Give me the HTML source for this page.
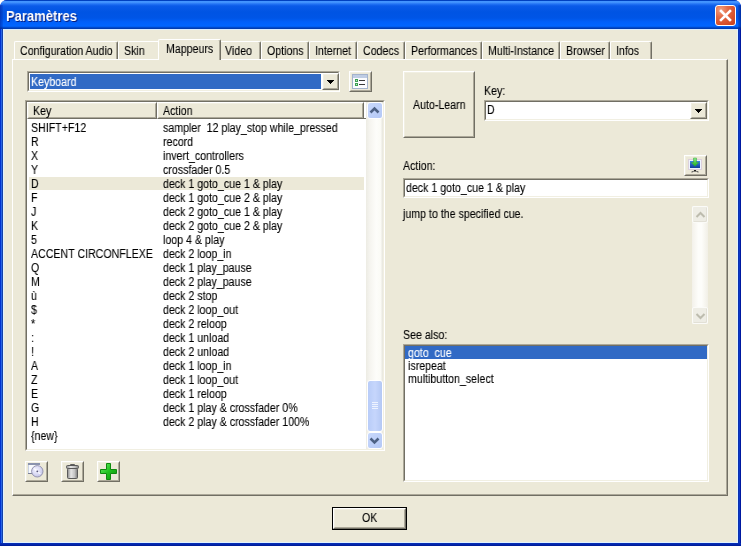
<!DOCTYPE html>
<html><head><meta charset="utf-8">
<style>
*{box-sizing:border-box}
html,body{margin:0;padding:0;width:741px;height:546px;overflow:hidden;background:#fff}
body{position:relative;font-family:"Liberation Sans",sans-serif;font-size:12px;color:#000}
.a{position:absolute}
.t{position:absolute;white-space:pre;line-height:13px;transform:scaleX(0.885);transform-origin:0 0;will-change:transform;-webkit-text-stroke:0.1px currentColor}
/* window frame */
#win{left:0;top:0;width:741px;height:546px;background:#0831D9;border-radius:7px 7px 0 0;overflow:hidden}
#title{left:0;top:0;width:741px;height:30px;border-radius:7px 7px 0 0;
 background:linear-gradient(to bottom,#0040C0 0px,#0040C0 1px,#3C8EFF 1px,#4A9AFF 2px,#2373F5 4px,#0A5AE8 6px,#0054E3 12px,#0055E6 18px,#0060FA 22px,#0066FF 26px,#0058E8 27px,#003CB0 28px,#003CB0 29px,#D8ECFF 29px,#D8ECFF 30px)}
#face{left:4px;top:30px;width:733px;height:512px;background:#ECE9D8}
#lline{left:3px;top:29px;width:1px;height:514px;background:#E0F2FF}
#rline{left:737px;top:29px;width:1px;height:514px;background:#E0F2FF}
#bline{left:3px;top:542px;width:735px;height:1px;background:#E0F2FF}
#lb1{left:0;top:29px;width:1px;height:517px;background:#0032D0}
#lb2{left:1px;top:29px;width:1px;height:517px;background:#2864E4}
#lb3{left:2px;top:29px;width:1px;height:517px;background:#1440A8}
#rb1{left:740px;top:29px;width:1px;height:517px;background:#0019A0}
#rb2{left:739px;top:29px;width:1px;height:517px;background:#0A36C8}
#rb3{left:738px;top:29px;width:1px;height:517px;background:#0A30B0}
#bb{left:0;top:543px;width:741px;height:3px;background:linear-gradient(#0830B8,#0022A8 2px,#00198F)}
#caption{left:6px;top:8px;font-weight:bold;font-size:14px;line-height:16px;color:#fff;letter-spacing:0;text-shadow:1px 1px 0 #0A1E7A;transform:scaleX(0.93)!important;-webkit-text-stroke:0!important}
#close{left:715px;top:5px;width:21px;height:21px;border:1px solid #fff;border-radius:3px;
 background:radial-gradient(circle at 25% 20%,#F3A07F 0,#E36A45 35%,#D8502A 70%,#C3401C 100%)}
/* tabs */
.tab{position:absolute;top:41px;height:19px;background:#ECE9D8;border-left:1px solid #fff;border-top:1px solid #fff;border-right:1px solid #716F64;border-top-left-radius:2px;border-top-right-radius:2px;box-shadow:inset -1px 0 0 #ACA899}
.tab .t{top:3px;left:5px}
.tabsel{top:39px;height:21px;z-index:2}
#pane{left:12px;top:59px;width:716px;height:437px;border-left:1px solid #fff;border-top:1px solid #fff;border-right:1px solid #716F64;border-bottom:1px solid #716F64;z-index:1}
#pane2{left:13px;top:60px;width:714px;height:435px;border-right:1px solid #ACA899;border-bottom:1px solid #ACA899;z-index:1}
/* sunken */
.sunk{position:absolute;border-top:1px solid #ACA899;border-left:1px solid #ACA899;border-right:1px solid #fff;border-bottom:1px solid #fff}
.sunk>.in{position:absolute;left:0;top:0;right:0;bottom:0;border-top:1px solid #716F64;border-left:1px solid #716F64;border-right:1px solid #F1EFE2;border-bottom:1px solid #F1EFE2;background:#fff}
.raised{position:absolute;background:#ECE9D8;border-top:1px solid #fff;border-left:1px solid #fff;border-right:1px solid #716F64;border-bottom:1px solid #716F64}
.raised>.in{position:absolute;left:0;top:0;right:0;bottom:0;border-top:1px solid #F1EFE2;border-left:1px solid #F1EFE2;border-right:1px solid #ACA899;border-bottom:1px solid #ACA899}
.arrow{position:absolute;width:0;height:0;border-left:4px solid transparent;border-right:4px solid transparent;border-top:4px solid #000}
.row{position:absolute;left:0;height:14px;width:336px}
</style></head><body>
<div id="win" class="a"></div>
<div id="title" class="a"></div>
<div id="lb1" class="a"></div><div id="lb2" class="a"></div><div id="lb3" class="a"></div>
<div id="rb1" class="a"></div><div id="rb2" class="a"></div><div id="rb3" class="a"></div>
<div id="bb" class="a"></div>
<div id="lline" class="a"></div><div id="rline" class="a"></div><div id="bline" class="a"></div>
<div id="face" class="a"></div>
<div class="a" style="left:0;top:5px;width:3px;height:24px;background:linear-gradient(to right,rgba(0,30,150,0.55),rgba(0,30,150,0.15))"></div>
<div class="a" style="left:738px;top:5px;width:3px;height:24px;background:linear-gradient(to left,rgba(0,20,120,0.6),rgba(0,20,120,0.15))"></div>
<div id="caption" class="t">Paramètres</div>
<div id="close" class="a"><svg width="19" height="19" style="position:absolute;left:0;top:0"><path d="M5 5 L14 14 M14 5 L5 14" stroke="#fff" stroke-width="2.6" stroke-linecap="square"/></svg></div>

<!-- tabs -->
<div class="tab" style="left:14px;width:104px"><div class="t">Configuration Audio</div></div>
<div class="tab" style="left:118px;width:43px"><div class="t">Skin</div></div>
<div class="tab tabsel" style="left:158px;width:63px"><div class="t" style="left:7px;top:3px">Mappeurs</div></div>
<div class="tab" style="left:219px;width:42px"><div class="t">Video</div></div>
<div class="tab" style="left:261px;width:48px"><div class="t">Options</div></div>
<div class="tab" style="left:309px;width:48px"><div class="t">Internet</div></div>
<div class="tab" style="left:357px;width:48px"><div class="t">Codecs</div></div>
<div class="tab" style="left:405px;width:77px"><div class="t">Performances</div></div>
<div class="tab" style="left:482px;width:78px"><div class="t">Multi-Instance</div></div>
<div class="tab" style="left:560px;width:50px"><div class="t">Browser</div></div>
<div class="tab" style="left:610px;width:42px"><div class="t">Infos</div></div>
<div id="pane" class="a"></div>
<div id="pane2" class="a"></div>

<div id="content" class="a" style="left:0;top:0;width:741px;height:546px;z-index:3">
<!-- combo keyboard -->
<div class="sunk" style="left:27px;top:71px;width:313px;height:21px"><div class="in">
 <div class="a" style="left:1px;top:1px;width:291px;height:15px;background:#316AC5"></div>
 <div class="t" style="left:2px;top:3px;color:#fff">Keyboard</div>
 <div class="raised" style="left:293px;top:0;width:17px;height:17px"><div class="in"></div>
  <svg class="a" style="left:4px;top:6px" width="7" height="4"><path d="M0 0h7v1h-1v1h-1v1h-1v1h-1v-1h-1v-1h-1v-1h-1z" fill="#000"/></svg></div>
</div></div>
<div class="raised" style="left:349px;top:71px;width:23px;height:21px"><div class="in"></div>
 <svg class="a" style="left:2px;top:2px" width="16" height="16" shape-rendering="crispEdges"><rect x="0.5" y="0.5" width="15" height="14" fill="#FBFCFE" stroke="#A3B3CC"/><rect x="1" y="1" width="14" height="3" fill="#BFCDE4"/><rect x="3" y="5" width="3" height="3" fill="#3E9E52"/><rect x="4" y="6" width="1" height="1" fill="#B8F0C0"/><rect x="3" y="9" width="3" height="3" fill="#3E9E52"/><rect x="4" y="10" width="1" height="1" fill="#B8F0C0"/><rect x="7" y="6" width="6" height="1" fill="#3A3A3A"/><rect x="7" y="10" width="6" height="1" fill="#3A3A3A"/></svg>
</div>

<!-- list view -->
<div class="sunk" style="left:25px;top:100px;width:360px;height:351px"><div class="in" style="overflow:hidden">
 <div id="hdr" class="a" style="left:0;top:0;width:339px;height:17px;background:#fff;border-bottom:1px solid #716F64">
  <div class="raised" style="left:0;top:0;width:130px;height:17px"><div class="in"></div><div class="t" style="left:5px;top:2px">Key</div></div>
  <div class="raised" style="left:130px;top:0;width:207px;height:17px"><div class="in"></div><div class="t" style="left:5px;top:2px">Action</div></div>
 </div>
 <div id="rows" class="a" style="left:1px;top:19px;width:338px;height:330px">
<div class="row" style="top:0px"><div class="t" style="left:3px;top:1px">SHIFT+F12</div><div class="t" style="left:135px;top:1px">sampler  12 play_stop while_pressed</div></div>
<div class="row" style="top:14px"><div class="t" style="left:3px;top:1px">R</div><div class="t" style="left:135px;top:1px">record</div></div>
<div class="row" style="top:28px"><div class="t" style="left:3px;top:1px">X</div><div class="t" style="left:135px;top:1px">invert_controllers</div></div>
<div class="row" style="top:42px"><div class="t" style="left:3px;top:1px">Y</div><div class="t" style="left:135px;top:1px">crossfader 0.5</div></div>
<div class="row" style="top:56px"><div class="a" style="left:1px;top:0;width:335px;height:13px;background:#ECE9D8"></div><div class="t" style="left:3px;top:1px">D</div><div class="t" style="left:135px;top:1px">deck 1 goto_cue 1 &amp; play</div></div>
<div class="row" style="top:70px"><div class="t" style="left:3px;top:1px">F</div><div class="t" style="left:135px;top:1px">deck 1 goto_cue 2 &amp; play</div></div>
<div class="row" style="top:84px"><div class="t" style="left:3px;top:1px">J</div><div class="t" style="left:135px;top:1px">deck 2 goto_cue 1 &amp; play</div></div>
<div class="row" style="top:98px"><div class="t" style="left:3px;top:1px">K</div><div class="t" style="left:135px;top:1px">deck 2 goto_cue 2 &amp; play</div></div>
<div class="row" style="top:112px"><div class="t" style="left:3px;top:1px">5</div><div class="t" style="left:135px;top:1px">loop 4 &amp; play</div></div>
<div class="row" style="top:126px"><div class="t" style="left:3px;top:1px">ACCENT CIRCONFLEXE</div><div class="t" style="left:135px;top:1px">deck 2 loop_in</div></div>
<div class="row" style="top:140px"><div class="t" style="left:3px;top:1px">Q</div><div class="t" style="left:135px;top:1px">deck 1 play_pause</div></div>
<div class="row" style="top:154px"><div class="t" style="left:3px;top:1px">M</div><div class="t" style="left:135px;top:1px">deck 2 play_pause</div></div>
<div class="row" style="top:168px"><div class="t" style="left:3px;top:1px">ù</div><div class="t" style="left:135px;top:1px">deck 2 stop</div></div>
<div class="row" style="top:182px"><div class="t" style="left:3px;top:1px">$</div><div class="t" style="left:135px;top:1px">deck 2 loop_out</div></div>
<div class="row" style="top:196px"><div class="t" style="left:3px;top:1px">*</div><div class="t" style="left:135px;top:1px">deck 2 reloop</div></div>
<div class="row" style="top:210px"><div class="t" style="left:3px;top:1px">:</div><div class="t" style="left:135px;top:1px">deck 1 unload</div></div>
<div class="row" style="top:224px"><div class="t" style="left:3px;top:1px">!</div><div class="t" style="left:135px;top:1px">deck 2 unload</div></div>
<div class="row" style="top:238px"><div class="t" style="left:3px;top:1px">A</div><div class="t" style="left:135px;top:1px">deck 1 loop_in</div></div>
<div class="row" style="top:252px"><div class="t" style="left:3px;top:1px">Z</div><div class="t" style="left:135px;top:1px">deck 1 loop_out</div></div>
<div class="row" style="top:266px"><div class="t" style="left:3px;top:1px">E</div><div class="t" style="left:135px;top:1px">deck 1 reloop</div></div>
<div class="row" style="top:280px"><div class="t" style="left:3px;top:1px">G</div><div class="t" style="left:135px;top:1px">deck 1 play &amp; crossfader 0%</div></div>
<div class="row" style="top:294px"><div class="t" style="left:3px;top:1px">H</div><div class="t" style="left:135px;top:1px">deck 2 play &amp; crossfader 100%</div></div>
<div class="row" style="top:308px"><div class="t" style="left:3px;top:1px">{new}</div><div class="t" style="left:135px;top:1px"></div></div>
</div>
 <!-- scrollbar -->
 <div class="a" style="left:339px;top:0;width:17px;height:347px;background:linear-gradient(to right,#EDECE4,#F6F5F0 25%,#FDFDFA 60%,#FBFBF6 85%,#E6E5DC)"></div>
 <div class="a" style="left:340px;top:0;width:16px;height:17px;border:1px solid #fff;border-radius:3px;background:linear-gradient(135deg,#C8D8FC,#B4C8F6)">
  <svg class="a" style="left:1px;top:3px" width="12" height="9"><path d="M1.5 6.5 L5.5 2.5 L9.5 6.5" stroke="#4D6185" stroke-width="2.5" fill="none"/></svg></div>
 <div class="a" style="left:340px;top:278px;width:16px;height:52px;border:1px solid #fff;border-radius:3px;background:linear-gradient(to right,#B8CCF8,#C6D6FC 50%,#B4C8F4)">
  <div class="a" style="left:4px;top:21px;width:6px;height:1px;background:#EEF3FF;box-shadow:0 2px 0 #EEF3FF,0 4px 0 #EEF3FF,0 6px 0 #EEF3FF"></div></div>
 <div class="a" style="left:340px;top:330px;width:16px;height:17px;border:1px solid #fff;border-radius:3px;background:linear-gradient(135deg,#C8D8FC,#B4C8F6)">
  <svg class="a" style="left:1px;top:3px" width="12" height="9"><path d="M1.5 2.5 L5.5 6.5 L9.5 2.5" stroke="#4D6185" stroke-width="2.5" fill="none"/></svg></div>
</div></div>

<!-- bottom icon buttons -->
<div class="raised" style="left:25px;top:461px;width:23px;height:21px"><div class="in"></div>
 <svg class="a" style="left:-1px;top:-1px" width="23" height="21">
  <defs><radialGradient id="cd" cx="0.4" cy="0.4" r="0.7"><stop offset="0" stop-color="#F4F4FF"/><stop offset="0.6" stop-color="#D6D6F2"/><stop offset="1" stop-color="#B8B8DE"/></radialGradient></defs>
  <rect x="3" y="2" width="12" height="11" fill="#F7F9FD"/>
  <rect x="3" y="2" width="1" height="11" fill="#C9D2E4"/>
  <rect x="3" y="2" width="12" height="2" fill="#8A93AE"/>
  <rect x="3" y="12" width="6" height="1" fill="#7A8096"/>
  <circle cx="12.3" cy="10.3" r="5.7" fill="url(#cd)" stroke="#8C8CA8" stroke-width="0.9"/>
  <path d="M9 7.5 L11.5 9.5 M15.5 13 L13.2 11.2" stroke="#FFFFFF" stroke-width="1.2" opacity="0.8"/>
  <circle cx="12.3" cy="10.3" r="0.9" fill="#5A5A7A"/>
 </svg></div>
<div class="raised" style="left:61px;top:461px;width:23px;height:21px"><div class="in"></div>
 <svg class="a" style="left:-1px;top:-1px" width="23" height="21">
  <defs><linearGradient id="tr" x1="0" x2="1"><stop offset="0" stop-color="#8A8A8A"/><stop offset="0.35" stop-color="#E6E6E6"/><stop offset="0.7" stop-color="#C4C4C4"/><stop offset="1" stop-color="#7A7A7A"/></linearGradient></defs>
  <rect x="9" y="3" width="5" height="2" rx="1" fill="#5E5E5E"/>
  <rect x="5.5" y="4.5" width="12" height="3" rx="1" fill="url(#tr)" stroke="#5A5A5A"/>
  <rect x="6.5" y="7.5" width="10" height="10" rx="1" fill="url(#tr)" stroke="#5A5A5A"/>
 </svg></div>
<div class="raised" style="left:97px;top:461px;width:23px;height:21px"><div class="in"></div>
 <svg class="a" style="left:-1px;top:-1px" width="23" height="21">
  <defs><linearGradient id="gp" x1="0" y1="0" x2="1" y2="1"><stop offset="0" stop-color="#6EF06E"/><stop offset="0.5" stop-color="#1FC21F"/><stop offset="1" stop-color="#0C900C"/></linearGradient></defs>
  <path d="M9.5 2.5h4v6h6v4h-6v6h-4v-6h-6v-4h6z" fill="url(#gp)" stroke="#0E8A0E" stroke-width="1"/>
 </svg></div>

<!-- right panel -->
<div class="raised" style="left:403px;top:71px;width:72px;height:67px"><div class="in"></div><div class="t" style="left:9px;top:27px">Auto-Learn</div></div>
<div class="t" style="left:484px;top:85px">Key:</div>
<div class="sunk" style="left:484px;top:100px;width:225px;height:21px"><div class="in">
 <div class="t" style="left:1px;top:2px">D</div>
 <div class="raised" style="left:204px;top:0px;width:17px;height:17px"><div class="in"></div>
  <svg class="a" style="left:4px;top:6px" width="7" height="4"><path d="M0 0h7v1h-1v1h-1v1h-1v1h-1v-1h-1v-1h-1v-1h-1z" fill="#000"/></svg></div>
</div></div>
<div class="t" style="left:403px;top:160px">Action:</div>
<div class="raised" style="left:684px;top:155px;width:23px;height:21px"><div class="in"></div>
 <svg class="a" style="left:-1px;top:-1px" width="23" height="21">
  <defs><linearGradient id="scr" x1="0" y1="0" x2="0" y2="1"><stop offset="0" stop-color="#3C86E8"/><stop offset="1" stop-color="#0E3C9A"/></linearGradient>
  <linearGradient id="ar" x1="0" y1="0" x2="0" y2="1"><stop offset="0" stop-color="#8CF08C"/><stop offset="1" stop-color="#18B018"/></linearGradient></defs>
  <rect x="4.5" y="4.5" width="13" height="10" fill="#EEF4FF" stroke="#DCD0DC"/>
  <rect x="6" y="6" width="10" height="7" fill="url(#scr)"/>
  <path d="M9.5 3h3v4.5h2.2l-3.7 3.8l-3.7-3.8h2.2z" fill="url(#ar)" stroke="#3AA03A" stroke-width="0.5"/>
  <path d="M7.5 17q2 0 2.8-1.5h1.4q0.8 1.5 2.8 1.5" fill="none" stroke="#444" stroke-width="1"/>
  <rect x="10.2" y="15" width="1.6" height="1.6" fill="#111"/>
 </svg></div>
<div class="sunk" style="left:403px;top:178px;width:306px;height:20px"><div class="in">
 <div class="t" style="left:1px;top:2px">deck 1 goto_cue 1 &amp; play</div>
</div></div>
<div class="t" style="left:403px;top:208px">jump to the specified cue.</div>
<div class="a" style="left:692px;top:206px;width:16px;height:118px;background:linear-gradient(to right,#F3F1EA,#FDFDFA 40%,#FDFDFA 60%,#F1EFE6)"></div>
<div class="a" style="left:692px;top:206px;width:16px;height:17px;border:1px solid #FBFBF8;border-radius:2px;background:#EEEDE5;box-shadow:inset -1px -1px 0 #E2E0D6">
 <svg class="a" style="left:2px;top:4px" width="11" height="8"><path d="M1.5 6 L5.5 2 L9.5 6" stroke="#BDBCAE" stroke-width="2" fill="none"/></svg></div>
<div class="a" style="left:692px;top:307px;width:16px;height:17px;border:1px solid #FBFBF8;border-radius:2px;background:#EEEDE5;box-shadow:inset -1px -1px 0 #E2E0D6">
 <svg class="a" style="left:2px;top:4px" width="11" height="8"><path d="M1.5 2 L5.5 6 L9.5 2" stroke="#BDBCAE" stroke-width="2" fill="none"/></svg></div>
<div class="t" style="left:403px;top:329px">See also:</div>
<div class="sunk" style="left:403px;top:344px;width:306px;height:138px"><div class="in">
 <div class="a" style="left:0px;top:0px;width:302px;height:13px;background:#316AC5"></div>
 <div class="t" style="left:3px;top:1px;color:#fff">goto_cue</div>
 <div class="t" style="left:3px;top:14px">isrepeat</div>
 <div class="t" style="left:3px;top:27px">multibutton_select</div>
</div></div>

<!-- OK -->
<div class="a" style="left:332px;top:507px;width:75px;height:23px;border:1px solid #000;background:#ECE9D8">
 <div class="raised" style="left:0;top:0;width:73px;height:21px"><div class="in"></div></div>
 <div class="t" style="left:29px;top:4px">OK</div>
</div>
</div>
</body></html>
